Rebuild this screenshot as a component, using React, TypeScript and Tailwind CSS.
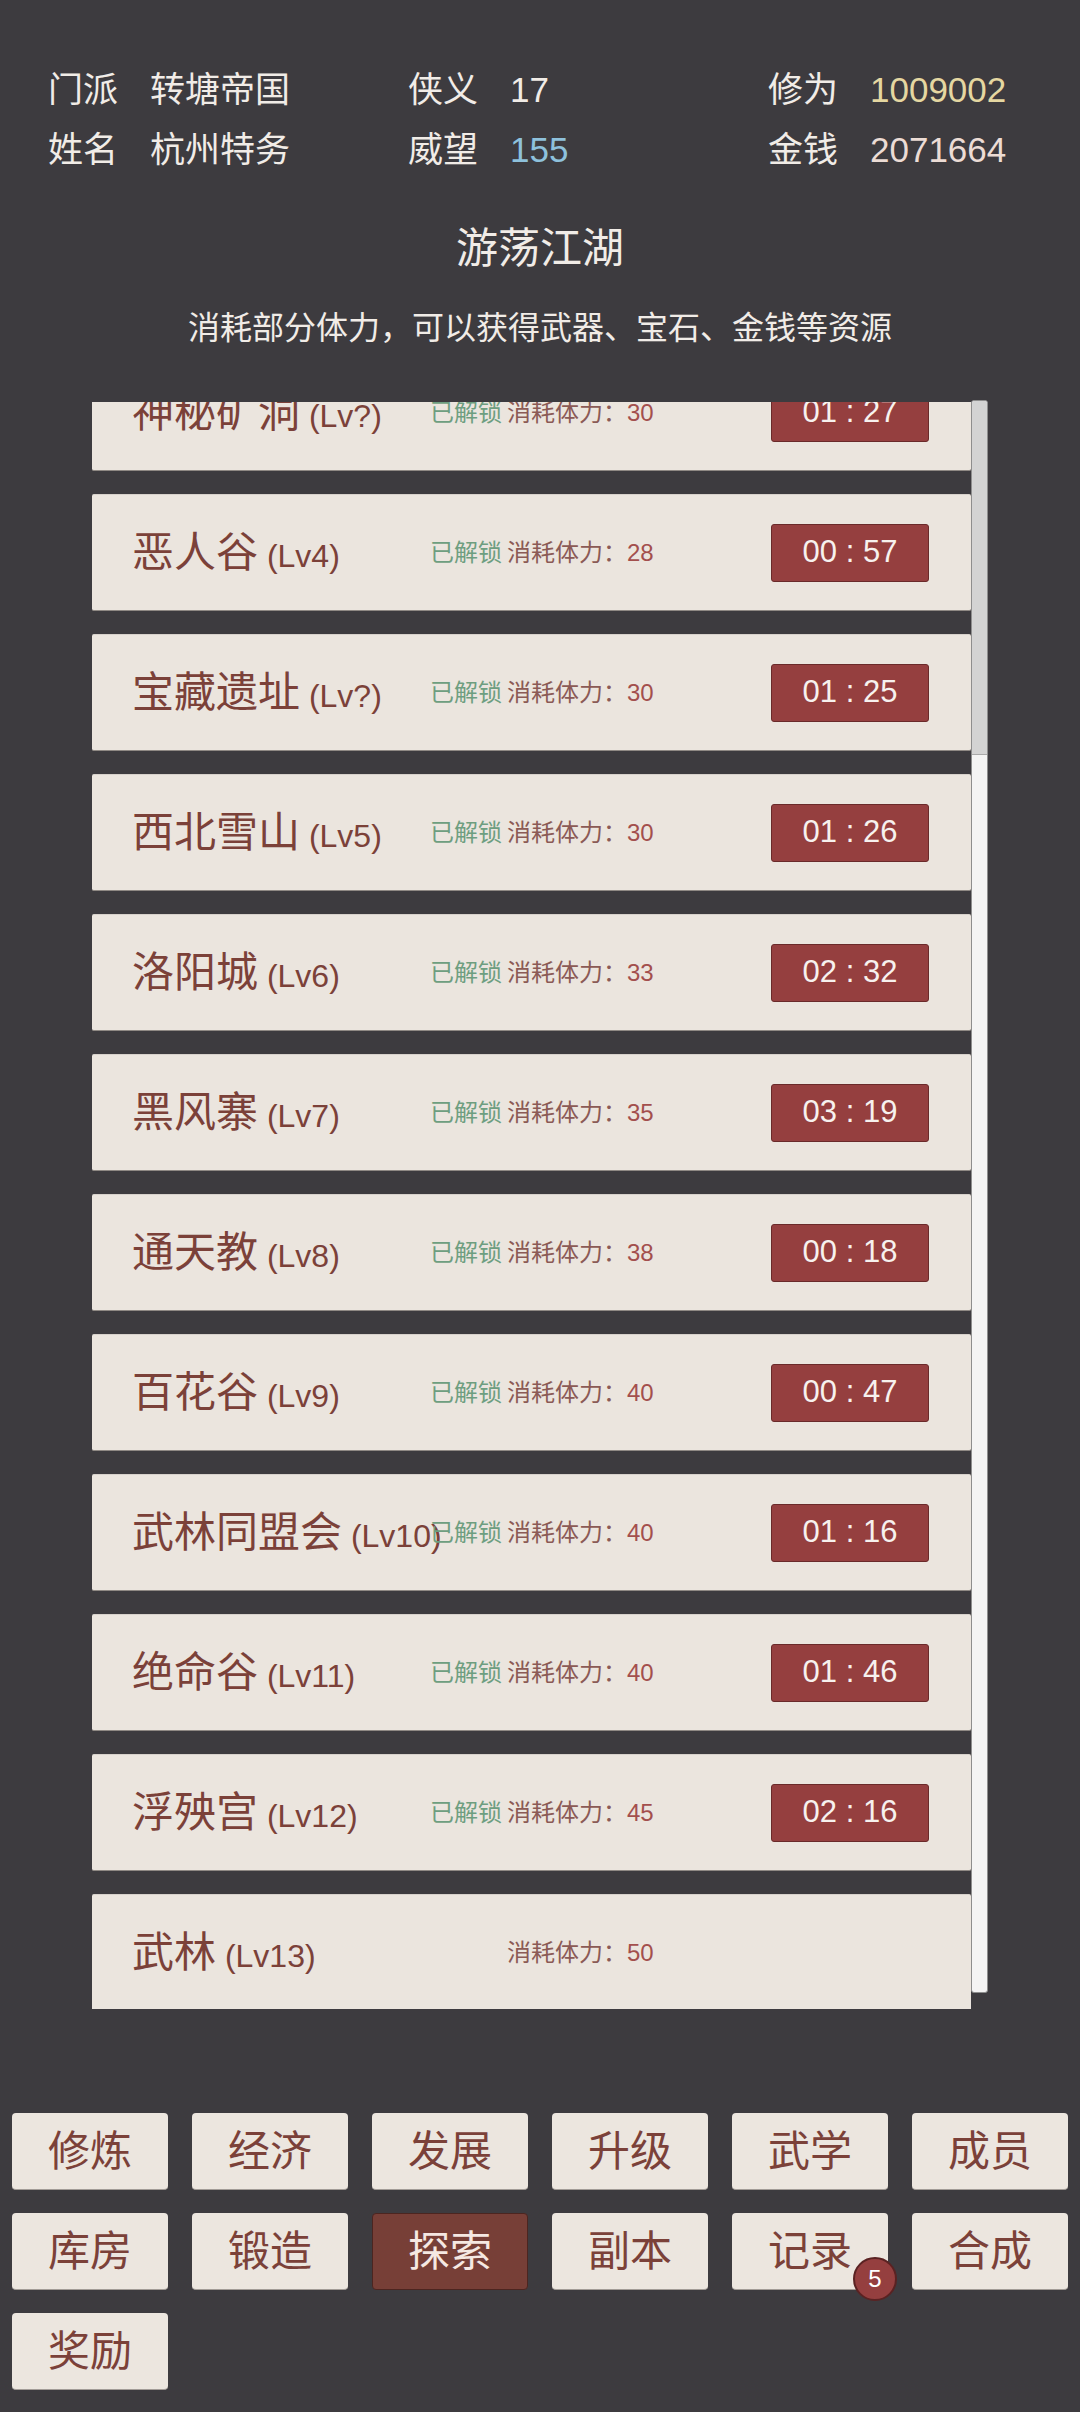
import React from 'react'

interface Place {
  name: string
  level: string
  cost: number
  unlocked: boolean
  timer?: string
}

const places: Array<Place> = [
  { name: '神秘矿洞', level: 'Lv?', cost: 30, unlocked: true, timer: '01 : 27' },
  { name: '恶人谷', level: 'Lv4', cost: 28, unlocked: true, timer: '00 : 57' },
  { name: '宝藏遗址', level: 'Lv?', cost: 30, unlocked: true, timer: '01 : 25' },
  { name: '西北雪山', level: 'Lv5', cost: 30, unlocked: true, timer: '01 : 26' },
  { name: '洛阳城', level: 'Lv6', cost: 33, unlocked: true, timer: '02 : 32' },
  { name: '黑风寨', level: 'Lv7', cost: 35, unlocked: true, timer: '03 : 19' },
  { name: '通天教', level: 'Lv8', cost: 38, unlocked: true, timer: '00 : 18' },
  { name: '百花谷', level: 'Lv9', cost: 40, unlocked: true, timer: '00 : 47' },
  { name: '武林同盟会', level: 'Lv10', cost: 40, unlocked: true, timer: '01 : 16' },
  { name: '绝命谷', level: 'Lv11', cost: 40, unlocked: true, timer: '01 : 46' },
  { name: '浮殃宫', level: 'Lv12', cost: 45, unlocked: true, timer: '02 : 16' },
  { name: '武林', level: 'Lv13', cost: 50, unlocked: false },
]

const navItems = ['修炼', '经济', '发展', '升级', '武学', '成员', '库房', '锻造', '探索', '副本', '记录', '合成', '奖励']

const StatItem = ({ label, value, valueColor }: { label: string, value: string, valueColor: string }) => (
  <div className="flex items-center h-[60px] pl-[48px]">
    <span className="w-[102px] shrink-0 text-[#f1ece7]">{label}</span>
    <span className={valueColor}>{value}</span>
  </div>
)

const PlaceRow = ({ place }: { place: Place }) => (
  <div className="h-[117px] shrink-0 flex items-center pl-[40px] pr-[42px] bg-[#ebe5de] rounded-[2px] border-t border-b border-t-[#d7d1cb] border-b-[#8f8984]">
    <div className="w-[298px] shrink-0 whitespace-nowrap text-[#7b4139]">
      <span className="text-[42px]">{place.name}</span>
      <span className="text-[32px]"> ({place.level})</span>
    </div>
    <span className={`w-[77px] shrink-0 text-[24px] text-[#6e9e80] ${place.unlocked ? '' : 'invisible'}`}>已解锁</span>
    <span className="text-[24px] text-[#8b5a55] whitespace-nowrap">
      消耗体力：<span className="text-[#a34f4d]">{place.cost}</span>
    </span>
    {place.timer ?
      <div className="ml-auto w-[158px] h-[58px] flex items-center justify-center bg-[#953f3f] border border-[#6a2a2a] rounded-[3px] text-[31px] text-[#f7f1ee]">
        {place.timer}
      </div> : null
    }
  </div>
)

const App = () => {
  return (
    <div className="min-h-[2412px] w-[1080px] bg-[#3d3b3f] font-[Liberation_Sans,Noto_Sans_CJK_SC,sans-serif] overflow-hidden">
      <div className="pt-[60px] grid grid-cols-3 text-[35px]">
        <StatItem label="门派" value="转塘帝国" valueColor="text-[#f1ece7]" />
        <StatItem label="侠义" value="17" valueColor="text-[#f1ece7]" />
        <StatItem label="修为" value="1009002" valueColor="text-[#e5d7a1]" />
        <StatItem label="姓名" value="杭州特务" valueColor="text-[#f1ece7]" />
        <StatItem label="威望" value="155" valueColor="text-[#8ec1dc]" />
        <StatItem label="金钱" value="2071664" valueColor="text-[#ecdcd5]" />
      </div>

      <h1 className="mt-[39px] h-[60px] leading-[60px] text-center text-[42px] text-[#f1ece7]">游荡江湖</h1>
      <p className="mt-[25px] h-[48px] leading-[48px] text-center text-[32px] text-[#f1ece7]">消耗部分体力，可以获得武器、宝石、金钱等资源</p>

      <div className="mt-[50px] mx-[92px] flex items-start">
        <div className="flex-1 h-[1607px] overflow-hidden">
          <div className="-mt-[48px] flex flex-col gap-[23px]">
            {places.map((place, index) => <PlaceRow place={place} key={index} />)}
          </div>
        </div>
        <div className="w-[17px] h-[1593px] -mt-[2px] shrink-0 bg-[#f4f4f4] border border-[#8e8e8e] rounded-[3px] overflow-hidden">
          <div className="h-[354px] bg-[#d3d3d3] border-b border-[#a9a9a9]" />
        </div>
      </div>

      <div className="mt-[104px] px-[12px] grid grid-cols-6 gap-x-[24px] gap-y-[23px]">
        {navItems.map((item) => {
          const active = item === '探索'
          return (
            <div
              key={item}
              className={`relative h-[77px] flex items-center justify-center rounded-[4px] text-[42px] ${active
                ? 'bg-[#773f37] text-[#f5e8e2] border border-[#4c2520]'
                : 'bg-[#ece6df] text-[#7b4139] border-b border-[#a29c97]'}`}
            >
              {item}
              {item === '记录' ?
                <span className="absolute -right-[9px] -bottom-[12px] w-[44px] h-[44px] flex items-center justify-center rounded-full bg-[#953f3f] border-2 border-[#5a2222] text-[24px] text-white">5</span> : null
              }
            </div>
          )
        })}
      </div>
    </div>
  )
}

export default App
